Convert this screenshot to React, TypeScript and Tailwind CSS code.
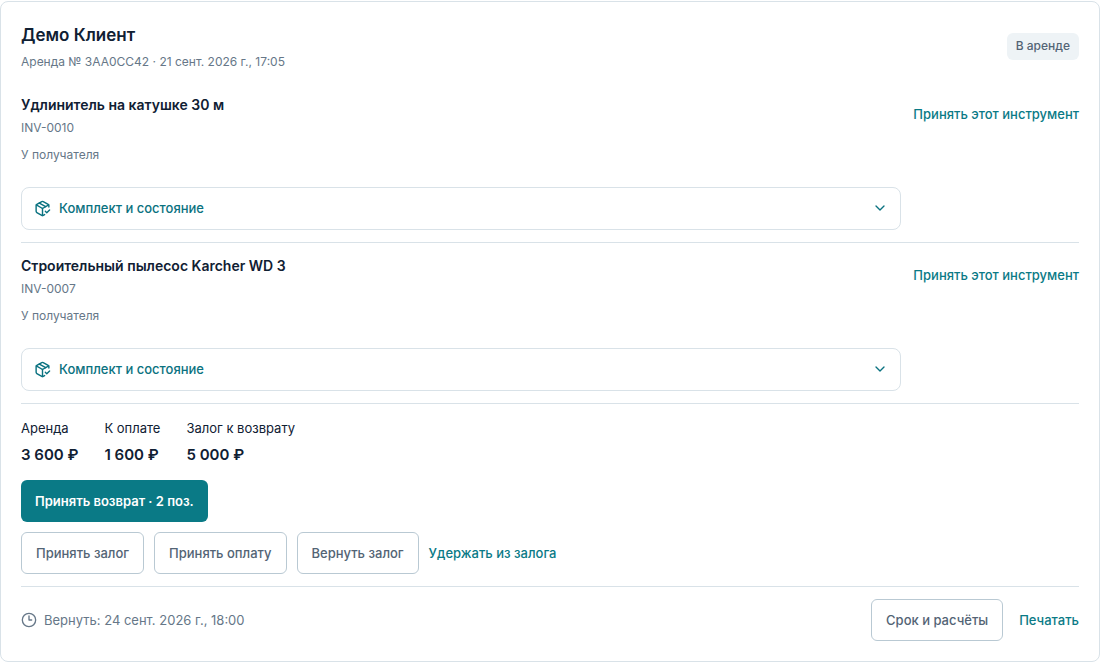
import { PackageCheck, ChevronDown, Clock3 } from "lucide-react";

type Tool = { name: string; code: string };

const tools: Tool[] = [
  { name: "Удлинитель на катушке 30 м", code: "INV-0010" },
  { name: "Строительный пылесос Karcher WD 3", code: "INV-0007" },
];

const totals = [
  { label: "Аренда", value: "3 600 ₽" },
  { label: "К оплате", value: "1 600 ₽" },
  { label: "Залог к возврату", value: "5 000 ₽" },
];

const outline =
  "rounded-md border border-[#b9c9d3] bg-white px-3.5 py-2.5 text-[13px] leading-5 font-medium text-[#536475]";
const link = "text-[13px] leading-5 font-medium text-[#0a7a86]";

function ToolRow({ tool }: { tool: Tool }) {
  return (
    <li className="flex items-start justify-between gap-3 border-b border-[#d9e2e8] py-3">
      <div className="max-w-[880px] flex-1">
        <h3 className="text-sm leading-[22px] font-semibold">{tool.name}</h3>
        <p className="mt-0.5 text-xs leading-5 text-[#667788]">{tool.code}</p>
        <p className="mt-[7px] text-xs leading-5 text-[#667788]">У получателя</p>
        <button
          type="button"
          className="mt-[22px] flex w-full items-center gap-2 rounded-lg border border-[#d9e2e8] px-3 pt-2.5 pb-[11px] text-[13px] leading-5 font-medium text-[#0a7280]"
        >
          <PackageCheck size={17} />
          <span className="flex-1 text-left">Комплект и состояние</span>
          <ChevronDown size={16} />
        </button>
      </div>
      <button type="button" className={`${link} mt-2.5`}>
        Принять этот инструмент
      </button>
    </li>
  );
}

export default function App() {
  return (
    <main className="pt-px font-['Inter',sans-serif] text-[#102033]">
      <article className="rounded-lg border border-[#d9e2e8] bg-white p-5">
        <header className="flex items-start justify-between">
          <div>
            <h2 className="text-[17px] leading-[26px] font-semibold">Демо Клиент</h2>
            <p className="mt-1 text-xs leading-5 text-[#667788]">Аренда № 3AA0CC42 · 21 сент. 2026 г., 17:05</p>
          </div>
          <span className="mt-[11px] rounded-md bg-[#eef3f6] px-[9px] pt-[3px] pb-1 text-xs leading-5 font-medium text-[#536475]">
            В аренде
          </span>
        </header>
        <ul className="mt-2.5">
          {tools.map((tool) => (
            <ToolRow key={tool.code} tool={tool} />
          ))}
        </ul>
        <dl className="mt-3.5 flex gap-[26px]">
          {totals.map((t) => (
            <div key={t.label}>
              <dt className="text-[13px] leading-5">{t.label}</dt>
              <dd className="mt-[7px] text-[15px] leading-5 font-semibold">{t.value}</dd>
            </div>
          ))}
        </dl>
        <button
          type="button"
          className="mt-[15px] rounded-md bg-[#0a7a86] px-3.5 py-[11px] text-[13px] leading-5 font-semibold text-white"
        >
          Принять возврат · 2 поз.
        </button>
        <div className="mt-2.5 flex flex-wrap items-center gap-2.5">
          <button type="button" className={outline}>Принять залог</button>
          <button type="button" className={outline}>Принять оплату</button>
          <button type="button" className={outline}>Вернуть залог</button>
          <button type="button" className={link}>Удержать из залога</button>
        </div>
        <footer className="mt-3 flex items-center justify-between border-t border-[#d9e2e8] pt-3">
          <p className="flex items-center gap-[7px] text-[13px] leading-5 text-[#667788]">
            <Clock3 size={16} />
            Вернуть: 24 сент. 2026 г., 18:00
          </p>
          <div className="flex items-center gap-4">
            <button type="button" className={outline}>Срок и расчёты</button>
            <button type="button" className={link}>Печатать</button>
          </div>
        </footer>
      </article>
    </main>
  );
}
